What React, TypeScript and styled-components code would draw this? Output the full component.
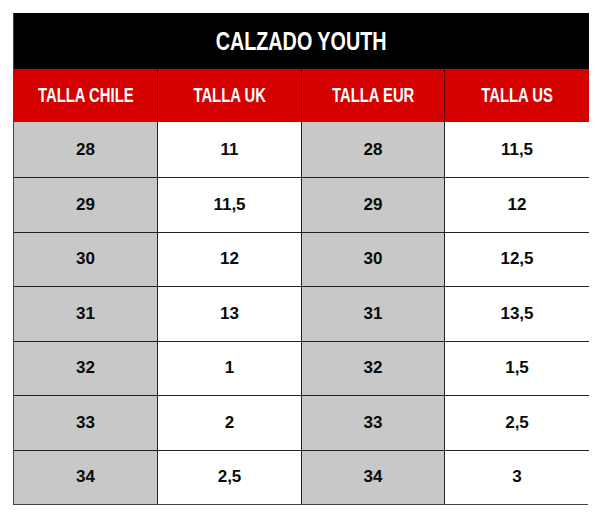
import React from "react";
import styled, { createGlobalStyle } from "styled-components";

const Global = createGlobalStyle`
  html, body { margin: 0; padding: 0; background: #fff; }
`;

const Page = styled.div`
  padding: 13px 0 0 13px;
  width: 600px;
  height: 515px;
  box-sizing: border-box;
`;

const Table = styled.div`
  width: 575px;
  display: grid;
  grid-template-columns: 143px 144px 143px 145px;
  border-right: 1px solid #444;
  border-bottom: 1px solid #444;
  border-left: 1px solid #444;
  box-sizing: border-box;
`;

const Condensed = styled.span<{ $scale: number }>`
  display: inline-block;
  white-space: nowrap;
  transform: scaleX(${(p) => p.$scale});
  transform-origin: center;
`;

const Title = styled.div`
  grid-column: 1 / -1;
  height: 56px;
  background: #000;
  color: #fff;
  display: flex;
  align-items: center;
  justify-content: center;
  font-family: "Liberation Sans", Arial, sans-serif;
  font-weight: 700;
  font-size: 25px;
`;

const HeadCell = styled.div<{ $first?: boolean }>`
  height: 53px;
  background: #d50000;
  color: #fff;
  display: flex;
  align-items: center;
  justify-content: center;
  font-family: "Liberation Sans", Arial, sans-serif;
  font-weight: 700;
  font-size: 19.5px;
  border-left: ${(p) => (p.$first ? "none" : "1px solid #5a0000")};
  box-sizing: border-box;
`;

const Cell = styled.div<{ $gray: boolean; $first: boolean; $top: boolean }>`
  height: ${(p) => (p.$top ? "55px" : "54.5px")};
  background: ${(p) => (p.$gray ? "#c8c8c8" : "#fff")};
  color: #0a0a0a;
  display: flex;
  align-items: center;
  justify-content: center;
  font-family: "Liberation Sans", Arial, sans-serif;
  font-weight: 700;
  font-size: 17px;
  border-left: ${(p) => (p.$first ? "none" : "1px solid #222")};
  border-top: ${(p) => (p.$top ? "none" : "1px solid #222")};
  box-sizing: border-box;
`;

const headers = ["TALLA CHILE", "TALLA UK", "TALLA EUR", "TALLA US"];
const rows = [
  ["28", "11", "28", "11,5"],
  ["29", "11,5", "29", "12"],
  ["30", "12", "30", "12,5"],
  ["31", "13", "31", "13,5"],
  ["32", "1", "32", "1,5"],
  ["33", "2", "33", "2,5"],
  ["34", "2,5", "34", "3"],
];

export default function App() {
  return (
    <>
      <Global />
      <Page>
        <Table>
          <Title>
            <Condensed $scale={0.79}>CALZADO YOUTH</Condensed>
          </Title>
          {headers.map((h, i) => (
            <HeadCell key={h} $first={i === 0}>
              <Condensed $scale={0.76}>{h}</Condensed>
            </HeadCell>
          ))}
          {rows.map((r, ri) =>
            r.map((v, ci) => (
              <Cell key={`${ri}-${ci}`} $gray={ci % 2 === 0} $first={ci === 0} $top={ri === 0}>
                {v}
              </Cell>
            ))
          )}
        </Table>
      </Page>
    </>
  );
}
